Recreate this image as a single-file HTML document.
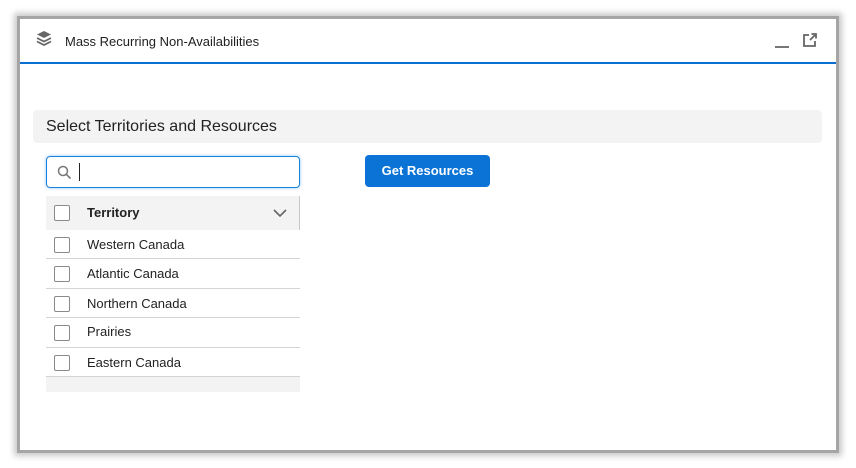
<!DOCTYPE html>
<html><head><style>
*{box-sizing:border-box;margin:0;padding:0}
body{width:856px;height:468px;background:#fff;position:relative;overflow:hidden;font-family:"Liberation Sans",Arial,sans-serif;color:#181818}
.win{position:absolute;left:17px;top:16px;width:822px;height:437px;border:3px solid #a5a5a5;box-shadow:0 0 6px 3px rgba(0,0,0,.22);background:#fff}
.hdr{position:absolute;left:0;top:0;right:0;height:45px;border-bottom:2px solid #0b6fd1}
.title{position:absolute;left:45px;top:15px;font-size:13px;color:#222}
.sec{position:absolute;left:13px;top:91px;width:789px;height:33px;background:#f3f3f3;border-radius:4px;font-size:16px;padding:8px 13px;color:#222}
.search{position:absolute;left:26px;top:137px;width:254px;height:32px;border:1px solid #1b82e0;border-radius:4px;box-shadow:0 0 3px #8cc4f5}
.btn{position:absolute;left:345px;top:136px;width:125px;height:32px;background:#0b73d6;border-radius:4px;color:#fff;font-size:13px;font-weight:bold;text-align:center;line-height:32px}
.tbl{position:absolute;left:26px;top:177px;width:254px}
.th{height:34px;background:#f3f3f3;position:relative;border-right:1px solid #c9c9c9}
.row{height:29.4px;position:relative;border-bottom:1px solid #d4d4d4}
.cb{position:absolute;left:8px;width:16px;height:16px;border:1px solid #8a8a8a;border-radius:2px;background:#fff}
.tx{position:absolute;left:41px;font-size:13px;color:#222}
.ft{height:15px;background:#f3f3f3}
</style></head><body>
<div class="win">
 <div class="hdr">
  <svg style="position:absolute;left:16px;top:11px" width="16" height="17" viewBox="0 0 16 17"><path d="M8 1 L15 4.5 L8 8 L1 4.5Z" fill="#666"/><path d="M1 8 L8 11.5 L15 8" stroke="#666" stroke-width="1.8" fill="none"/><path d="M1 11.5 L8 15 L15 11.5" stroke="#666" stroke-width="1.8" fill="none"/></svg>
  <div class="title">Mass Recurring Non-Availabilities</div>
  <div style="position:absolute;left:755px;top:27px;width:14px;height:2px;background:#777"></div>
  <svg style="position:absolute;left:782px;top:13px" width="16" height="16" viewBox="0 0 16 16"><path d="M7 3 H2 V14 H13 V9" stroke="#666" stroke-width="1.8" fill="none"/><path d="M8 8 L14 2 M9.5 2 H14 V6.5" stroke="#666" stroke-width="1.8" fill="none"/></svg>
 </div>
 <div class="sec">Select Territories and Resources</div>
 <div class="search">
  <svg style="position:absolute;left:10px;top:8px" width="15" height="15" viewBox="0 0 15 15"><circle cx="6" cy="6" r="4.5" stroke="#777" stroke-width="1.5" fill="none"/><path d="M9.3 9.3 L13.5 13.5" stroke="#777" stroke-width="1.6"/></svg>
  <div style="position:absolute;left:32px;top:6px;width:1px;height:18px;background:#222"></div>
 </div>
 <div class="btn">Get Resources</div>
 <div class="tbl">
  <div class="th"><div class="cb" style="top:9px"></div><div class="tx" style="top:9px;font-weight:bold">Territory</div>
   <svg style="position:absolute;left:227px;top:12px" width="14" height="10" viewBox="0 0 14 10"><path d="M1 2 L7 8 L13 2" stroke="#666" stroke-width="1.6" fill="none"/></svg></div>
  <div class="row"><div class="cb" style="top:7px"></div><div class="tx" style="top:7px">Western Canada</div></div>
  <div class="row"><div class="cb" style="top:7px"></div><div class="tx" style="top:7px">Atlantic Canada</div></div>
  <div class="row"><div class="cb" style="top:7px"></div><div class="tx" style="top:7px">Northern Canada</div></div>
  <div class="row"><div class="cb" style="top:7px"></div><div class="tx" style="top:6px">Prairies</div></div>
  <div class="row"><div class="cb" style="top:7px"></div><div class="tx" style="top:7px">Eastern Canada</div></div>
  <div class="ft"></div>
 </div>
</div>
</body></html>
